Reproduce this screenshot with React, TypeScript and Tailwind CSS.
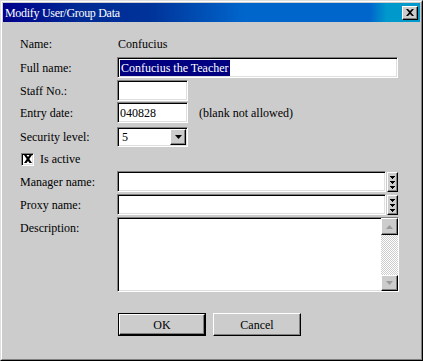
const serif = "[font-family:'Liberation_Serif',serif]";

const sunken =
  "bg-white border border-t-[#808080] border-l-[#808080] border-b-white border-r-white shadow-[inset_1px_1px_0_#000,inset_-1px_-1px_0_#dfdfdf]";
const raised =
  "bg-[#cccccc] border border-t-white border-l-white border-b-black border-r-black shadow-[inset_-1px_-1px_0_#808080]";

function Row({ label, children, className = "" }: { label: string; children?: any; className?: string }) {
  return (
    <div className={"flex items-center " + className}>
      <div className="w-[97px] shrink-0">{label}</div>
      {children}
    </div>
  );
}

function TinyArrows() {
  return (
    <svg width="5" height="14" viewBox="0 0 5 14" className="block">
      <path d="M0 1h5v1H4v1H1V2H0z M2 3h1v1H2z" fill="#000" />
      <path d="M0 6h5v1H4v1H1V7H0z M2 8h1v1H2z" fill="#000" />
      <path d="M0 11h5v1H4v1H1v-1H0z M2 13h1v1H2z" fill="#000" />
    </svg>
  );
}

function PickField() {
  return (
    <div className="flex items-center">
      <div className={"w-[269px] h-[21px] " + sunken}></div>
      <div className={"ml-[1px] w-[11px] h-[20px] flex items-center justify-center " + raised}>
        <TinyArrows />
      </div>
    </div>
  );
}

export default function App() {
  return (
    <div className={"w-[423px] h-[361px] bg-[#cccccc] text-black text-[12px] leading-none " + serif}>
      <div className="w-full h-full border border-t-[#dfdfdf] border-l-[#dfdfdf] border-b-black border-r-black">
        <div className="w-full h-full border border-t-white border-l-white border-b-[#808080] border-r-[#808080] p-px flex flex-col">
          {/* title bar */}
          <div className="h-[19px] shrink-0 flex items-center justify-between pl-[2px] pr-[2px] bg-[linear-gradient(to_right,#00008c_0%,#002a94_18%,#003399_35%,#0066cc_58%,#0066cc_88%,#0099cc_92%,#0099cc_100%)]">
            <span className="text-white text-[12px] tracking-[-0.3px]">Modify User/Group Data</span>
            <div className={"w-[16px] h-[14px] flex items-center justify-center " + raised}>
              <svg width="8" height="7" viewBox="0 0 8 7">
                <path d="M0 0h2l2 2 2-2h2L5 3.5 8 7H6L4 5 2 7H0l3-3.5z" fill="#000" />
              </svg>
            </div>
          </div>

          {/* form */}
          <div className="pl-[17px] pt-[12px] flex flex-col">
            <Row label="Name:" className="h-[20px]">
              <span className="ml-[1px]">Confucius</span>
            </Row>
            <Row label="Full name:" className="h-[21px] mt-[3px]">
              <div className={"w-[281px] h-[21px] flex items-center pl-[2px] " + sunken}>
                <span className="bg-[#000080] text-white px-px py-[2px]">Confucius the Teacher</span>
              </div>
            </Row>
            <Row label="Staff No.:" className="h-[21px] mt-[2px]">
              <div className={"w-[71px] h-[21px] " + sunken}></div>
            </Row>
            <Row label="Entry date:" className="h-[21px] mt-[1px]">
              <div className={"w-[71px] h-[21px] flex items-center pl-[2px] " + sunken}>040828</div>
              <span className="ml-[11px]">(blank not allowed)</span>
            </Row>
            <Row label="Security level:" className="h-[20px] mt-[4px]">
              <div className={"w-[71px] h-[20px] flex items-center justify-between pl-[4px] pr-[1px] " + sunken}>
                <span>5</span>
                <div className={"w-[16px] h-[16px] flex items-center justify-center " + raised}>
                  <svg width="7" height="4" viewBox="0 0 7 4">
                    <path d="M0 0h7L3.5 4z" fill="#000" />
                  </svg>
                </div>
              </div>
            </Row>
            <div className="h-[20px] mt-[2px] flex items-center">
              <div className={"ml-[1px] w-[13px] h-[13px] flex items-center justify-center " + sunken}>
                <svg width="8" height="8" viewBox="0 0 8 8">
                  <path d="M0 0h2.5L4 2 5.5 0H8L5.3 4 8 8H5.5L4 6 2.5 8H0l2.7-4z" fill="#000" />
                </svg>
              </div>
              <span className="ml-[6px]">Is active</span>
            </div>
            <Row label="Manager name:" className="h-[21px] mt-[2px]">
              <PickField />
            </Row>
            <Row label="Proxy name:" className="h-[21px] mt-[2px]">
              <PickField />
            </Row>
            <div className="flex mt-[2px] h-[75px]">
              <div className="w-[97px] shrink-0 pt-[5px]">Description:</div>
              <div className={"w-[282px] h-[75px] flex justify-end " + sunken}>
                <div className="w-[17px] h-full flex flex-col">
                  <div className={"w-[17px] h-[17px] shrink-0 flex items-center justify-center " + raised}>
                    <svg width="7" height="4" viewBox="0 0 7 4">
                      <path d="M3.5 0L7 4H0z" fill="#9a9a9a" />
                    </svg>
                  </div>
                  <div className="flex-1 bg-[repeating-conic-gradient(#ffffff_0_25%,#cccccc_0_50%)] bg-[length:2px_2px]"></div>
                  <div className={"w-[17px] h-[16px] shrink-0 flex items-center justify-center " + raised}>
                    <svg width="7" height="4" viewBox="0 0 7 4">
                      <path d="M0 0h7L3.5 4z" fill="#9a9a9a" />
                    </svg>
                  </div>
                </div>
              </div>
            </div>

            {/* buttons */}
            <div className="flex mt-[21px] ml-[98px] gap-[7px]">
              <div className="w-[88px] h-[23px] border border-black">
                <div className={"w-full h-full flex items-center justify-center " + raised}>OK</div>
              </div>
              <div className={"w-[88px] h-[23px] flex items-center justify-center " + raised}>Cancel</div>
            </div>
          </div>
        </div>
      </div>
    </div>
  );
}
